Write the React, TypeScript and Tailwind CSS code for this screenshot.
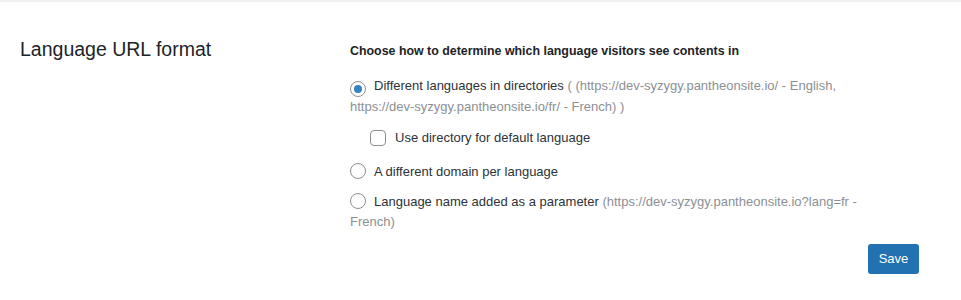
import React from "react";

function Radio({ checked }: { checked?: boolean }) {
  return (
    <span className="inline-flex h-4 w-4 shrink-0 items-center justify-center rounded-full border border-[#8c8f94] bg-white align-[-3px]">
      {checked && <span className="h-2 w-2 rounded-full bg-[#3582c4]" />}
    </span>
  );
}

export default function App() {
  return (
    <div
      className="min-h-[300px] w-[961px] bg-white text-[13px] text-[#2c3338]"
      style={{ fontFamily: '"Liberation Sans", Arial, sans-serif' }}
    >
      <div className="h-[2px] w-full bg-[#f0f0f0]" />
      <div className="flex pt-[35px]">
        <div className="w-[350px] pl-5">
          <h2 className="text-[19.5px] font-normal leading-6 text-[#1d2327]">Language URL format</h2>
        </div>
        <div className="flex w-[569px] flex-col">
          <div className="mt-[4px] text-[12.4px] font-bold leading-5 text-[#1d2327]">
            Choose how to determine which language visitors see contents in
          </div>
          <div className="mt-[15px] w-[512px] leading-5">
            <Radio checked />
            <span className="ml-[8px]">Different languages in directories</span>{" "}
            <span className="text-[#8c8f94]">
              ( (https://dev-syzygy.pantheonsite.io/ - English, https://dev-syzygy.pantheonsite.io/fr/ - French) )
            </span>
          </div>
          <div className="ml-5 mt-[11px] flex items-center leading-5">
            <span className="h-4 w-4 rounded-[4px] border border-[#8c8f94] bg-white" />
            <span className="ml-[9px]">Use directory for default language</span>
          </div>
          <div className="mt-[14px] w-[512px] leading-5">
            <Radio />
            <span className="ml-[8px]">A different domain per language</span>
          </div>
          <div className="mt-[10px] w-[512px] leading-5">
            <Radio />
            <span className="ml-[8px]">Language name added as a parameter</span>{" "}
            <span className="text-[#8c8f94]">(https://dev-syzygy.pantheonsite.io?lang=fr - French)</span>
          </div>
          <div className="mt-[12px] flex justify-end">
            <button className="h-[30px] w-[51px] rounded-[3px] bg-[#2271b1] text-[13px] text-white">Save</button>
          </div>
        </div>
      </div>
    </div>
  );
}
